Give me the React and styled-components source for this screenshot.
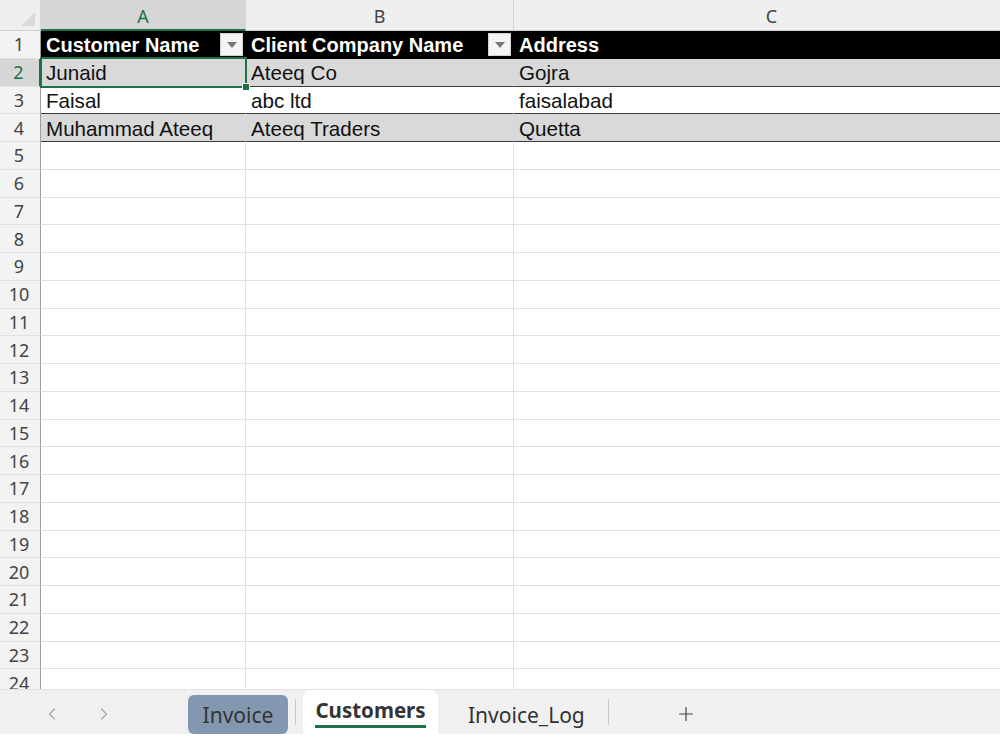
import styled, { createGlobalStyle } from "styled-components";
import { ChevronLeft, ChevronRight, Plus } from "lucide-react";

const GlobalStyle = createGlobalStyle`
	html, body {
		margin: 0;
		padding: 0;
		background: #fff;
	}
	* {
		box-sizing: border-box;
	}
`;

const columns = [
	{ key: "A", width: 205 },
	{ key: "B", width: 268 },
	{ key: "C", width: 516 },
];

const tableRows = [
	["Junaid", "Ateeq Co", "Gojra"],
	["Faisal", "abc ltd", "faisalabad"],
	["Muhammad Ateeq", "Ateeq Traders", "Quetta"],
];

const headings = ["Customer Name", "Client Company Name", "Address"];

function App() {
	const emptyRows = [];
	for (let i = 5; i <= 24; i++) emptyRows.push(i);

	return (
		<>
			<GlobalStyle />
			<Window>
				<Sheet>
					<Row $height={31}>
						<Corner>
							<CornerTriangle />
						</Corner>
						{columns.map((col) => (
							<ColHeader key={col.key} $width={col.width} $selected={col.key === "A"}>
								{col.key}
							</ColHeader>
						))}
					</Row>

					<Row $height={27.75}>
						<RowHeader>1</RowHeader>
						{columns.map((col, i) => (
							<Cell key={col.key} $width={col.width} $variant='head'>
								{headings[i]}
								{i < 2 && (
									<FilterButton>
										<FilterArrow />
									</FilterButton>
								)}
							</Cell>
						))}
					</Row>

					{tableRows.map((data, r) => (
						<Row key={r} $height={27.75}>
							<RowHeader $selected={r === 0}>{r + 2}</RowHeader>
							{columns.map((col, i) => (
								<Cell
									key={col.key}
									$width={col.width}
									$variant={r % 2 === 0 ? "band" : "plain"}>
									{data[i]}
									{r === 0 && i === 0 && (
										<Selection>
											<FillHandle />
										</Selection>
									)}
								</Cell>
							))}
						</Row>
					))}

					{emptyRows.map((n) => (
						<Row key={n} $height={27.75}>
							<RowHeader>{n}</RowHeader>
							{columns.map((col) => (
								<Cell key={col.key} $width={col.width} />
							))}
						</Row>
					))}
				</Sheet>

				<TabBar>
					<NavButton>
						<ChevronLeft size={20} strokeWidth={1.3} />
					</NavButton>
					<NavButton>
						<ChevronRight size={20} strokeWidth={1.3} />
					</NavButton>
					<ColoredTab>Invoice</ColoredTab>
					<Divider />
					<ActiveTab>
						<ActiveLabel>Customers</ActiveLabel>
					</ActiveTab>
					<Tab>Invoice_Log</Tab>
					<Divider />
					<AddButton>
						<Plus size={22} strokeWidth={1.3} />
					</AddButton>
				</TabBar>
				<BottomStrip />
			</Window>
		</>
	);
}

const Window = styled.div`
	width: 1000px;
	height: 750px;
	overflow: hidden;
	display: flex;
	flex-direction: column;
	background: #fff;
`;

const Sheet = styled.div`
	height: 689px;
	overflow: hidden;
	display: flex;
	flex-direction: column;
	flex-shrink: 0;
`;

const Row = styled.div`
	display: flex;
	flex-shrink: 0;
	height: ${(p) => p.$height}px;
`;

const Corner = styled.div`
	position: relative;
	width: 41px;
	flex-shrink: 0;
	background: #efefef;
	border-right: 1px solid #d4d4d4;
	border-bottom: 1px solid #cfcfcf;
`;

const CornerTriangle = styled.div`
	position: absolute;
	right: 5px;
	bottom: 4px;
	width: 0;
	height: 0;
	border-left: 14px solid transparent;
	border-bottom: 14px solid #dadada;
`;

const ColHeader = styled.div`
	width: ${(p) => p.$width}px;
	flex-shrink: 0;
	display: flex;
	align-items: center;
	justify-content: center;
	padding-top: 2px;
	font-family: "Noto Sans", "Open Sans", sans-serif;
	font-size: 18px;
	color: ${(p) => (p.$selected ? "#1e7145" : "#444")};
	background: ${(p) => (p.$selected ? "#d6d6d6" : "#efefef")};
	border-right: 1px solid #d4d4d4;
	border-bottom: ${(p) => (p.$selected ? "2px solid #1e7145" : "1px solid #cfcfcf")};
`;

const RowHeader = styled.div`
	width: 41px;
	flex-shrink: 0;
	display: flex;
	align-items: center;
	justify-content: center;
	padding-right: 2px;
	font-family: "Noto Sans", "Open Sans", sans-serif;
	font-size: 18px;
	color: ${(p) => (p.$selected ? "#1e7145" : "#444")};
	background: ${(p) => (p.$selected ? "#d6d6d6" : "#f3f3f3")};
	border-right: ${(p) => (p.$selected ? "2px solid #1e7145" : "1px solid #9d9d9d")};
	border-bottom: 1px solid #e1e1e1;
`;

const cellVariants = {
	head: `
		background: #000;
		color: #fff;
		font-weight: 700;
		font-size: 20px;
		border-right-color: #000;
		border-bottom-color: #000;
	`,
	band: `
		background: #d9d9d9;
		color: #111;
		border-right-color: #d9d9d9;
		border-bottom-color: #3a3a3a;
	`,
	plain: `
		background: #fff;
		color: #111;
		border-right-color: #fff;
		border-bottom-color: #3a3a3a;
	`,
};

const Cell = styled.div`
	position: relative;
	width: ${(p) => p.$width}px;
	flex-shrink: 0;
	display: flex;
	align-items: center;
	padding: 2px 0 0 5px;
	font-family: "Liberation Sans", Arial, sans-serif;
	font-size: 20.6px;
	white-space: nowrap;
	border-right: 1px solid #e1e1e1;
	border-bottom: 1px solid #e1e1e1;
	${(p) => cellVariants[p.$variant] || ""}
`;

const FilterButton = styled.div`
	position: absolute;
	right: 2px;
	top: 2px;
	width: 23px;
	height: 23px;
	background: #f4f4f4;
	border: 1px solid #d2d2d2;
	display: flex;
	align-items: center;
	justify-content: center;
`;

const FilterArrow = styled.div`
	width: 0;
	height: 0;
	border-left: 5px solid transparent;
	border-right: 5px solid transparent;
	border-top: 6px solid #777;
`;

const Selection = styled.div`
	position: absolute;
	z-index: 5;
	left: -1px;
	top: -2px;
	right: -2px;
	bottom: -2px;
	border: 2px solid #1e7145;
	pointer-events: none;
`;

const FillHandle = styled.div`
	position: absolute;
	right: -5px;
	bottom: -5px;
	width: 8px;
	height: 8px;
	background: #1e7145;
	border: 1px solid #fff;
`;

const TabBar = styled.div`
	height: 45px;
	flex-shrink: 0;
	display: flex;
	align-items: flex-end;
	background: #f0f0f0;
	border-top: 1px solid #e3e3e3;
	padding-left: 42px;
`;

const NavButton = styled.div`
	width: 52px;
	height: 40px;
	display: flex;
	align-items: center;
	justify-content: flex-start;
	color: #a0a0a0;
`;

const TabText = styled.div`
	height: 39px;
	display: flex;
	align-items: center;
	font-family: "Noto Sans", "Open Sans", sans-serif;
	font-size: 21px;
	color: #333;
`;

const ColoredTab = styled(TabText)`
	width: 100px;
	margin-left: 42px;
	justify-content: center;
	border-radius: 6px;
	background: #8497b0;
`;

const Tab = styled(TabText)`
	padding: 0 16px 0 30px;
`;

const Divider = styled.div`
	width: 1px;
	height: 26px;
	align-self: center;
	margin: 0 7px;
	background: #c9c9c9;
`;

const ActiveTab = styled.div`
	height: 44px;
	width: 135px;
	display: flex;
	align-items: flex-start;
	justify-content: center;
	padding-top: 8px;
	background: #fff;
	border-radius: 8px 8px 0 0;
`;

const ActiveLabel = styled.div`
	font-family: "Noto Sans", "Open Sans", sans-serif;
	font-size: 20.5px;
	font-weight: 700;
	color: #333;
	line-height: 24px;
	padding-bottom: 3px;
	border-bottom: 3px solid #1e7145;
`;

const AddButton = styled.div`
	height: 40px;
	margin-left: 59px;
	display: flex;
	align-items: center;
	color: #444;
`;

const BottomStrip = styled.div`
	flex: 1;
	background: #fff;
`;

export default App;
